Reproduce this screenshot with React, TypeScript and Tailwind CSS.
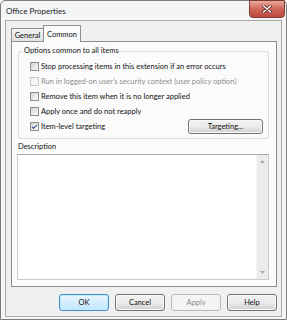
import { Check } from "lucide-react";

const options = [
  { label: "Stop processing items in this extension if an error occurs", checked: false, disabled: false },
  { label: "Run in logged-on user's security context (user policy option)", checked: false, disabled: true },
  { label: "Remove this item when it is no longer applied", checked: false, disabled: false },
  { label: "Apply once and do not reapply", checked: false, disabled: false },
  { label: "Item-level targeting", checked: true, disabled: false },
];

function CheckBox({ checked, disabled }: { checked: boolean; disabled: boolean }) {
  return (
    <span
      className={
        disabled
          ? "w-[9px] h-[9px] shrink-0 border border-[#c9c9c9] bg-[#f4f4f4]"
          : "w-[9px] h-[9px] shrink-0 border border-[#8c8c8c] bg-gradient-to-br from-[#d4d4d4] to-[#fafafa] flex items-center justify-center"
      }
    >
      {checked && <Check size={8} strokeWidth={3.5} className="text-[#26418c]" />}
    </span>
  );
}

function Button({ label, kind }: { label: string; kind?: "default" | "disabled" }) {
  const base = "w-[50px] h-[17px] rounded-[3px] border flex items-center justify-center";
  if (kind === "default")
    return (
      <div className={`${base} border-[#3d8ccc] bg-gradient-to-b from-[#eaf6fd] to-[#bee6fd] shadow-[inset_0_0_0_1px_#c8eafc]`}>
        {label}
      </div>
    );
  if (kind === "disabled")
    return <div className={`${base} border-[#b5b9bc] bg-[#f4f4f4] text-[#8a8a8a]`}>{label}</div>;
  return (
    <div className={`${base} border-[#707070] bg-gradient-to-b from-[#f2f2f2] via-[#ebebeb] to-[#cfcfcf] shadow-[inset_0_0_0_1px_#fbfbfb]`}>
      {label}
    </div>
  );
}

export default function App() {
  return (
    <div className="w-[287px] h-[320px] bg-white font-['Lato',sans-serif] text-[7.5px] leading-none text-[#111] whitespace-nowrap">
      <div className="w-[287px] h-[320px] flex flex-col border border-[#7b7b7b] rounded-t-[5px] bg-[#f4f5f6]">
        {/* Title bar */}
        <div className="relative h-[19px] shrink-0 flex items-center pl-[5px] pt-[1px]">
          <span className="text-[8px] text-[#222]">Office Properties</span>
          <div className="absolute right-[1px] top-[-1px] w-[36px] h-[18px] rounded-b-[4px] border border-[#7d3a35] bg-gradient-to-b from-[#e9a99c] via-[#d0675a] to-[#c0463c] flex items-center justify-center">
            <svg width="10" height="8" viewBox="0 0 10 8">
              <path d="M1.5 1 L8.5 7 M8.5 1 L1.5 7" stroke="#5e2620" strokeWidth="3" strokeLinecap="round" />
              <path d="M1.5 1 L8.5 7 M8.5 1 L1.5 7" stroke="#fff" strokeWidth="1.6" strokeLinecap="round" />
            </svg>
          </div>
        </div>

        {/* Client area */}
        <div className="flex-1 mx-[4px] mb-[2px] border border-[#a9a9a9] bg-[#f0f0f0] flex flex-col">
          {/* Tabs */}
          <div className="flex items-end ml-[5px] mt-[4px] h-[16px]">
            <div className="h-[13px] w-[33px] border border-b-0 border-[#8c8e94] bg-gradient-to-b from-[#f3f3f3] to-[#e3e3e3] flex items-center justify-center pt-[1px]">
              General
            </div>
            <div className="relative z-10 h-[17px] mb-[-1px] w-[38px] -ml-[1px] border border-b-0 border-[#8c8e94] bg-[#fbfbfb] flex items-start justify-center pt-[5px]">
              Common
            </div>
          </div>

          {/* Panel */}
          <div className="h-[246px] ml-[5px] mr-[4px] border border-[#8c8e94] bg-[#fbfbfb] flex flex-col">
            {/* Group box */}
            <div className="relative h-[88px] mt-[9px] ml-[6px] mr-[7px] border border-[#d5dfe5] rounded-[2px] flex flex-col pt-[7px] pb-[4px]">
              <span className="absolute left-[4px] top-[-5px] px-[1px] bg-[#fbfbfb]">Options common to all items</span>
              {options.map((o) => (
                <div key={o.label} className="h-[15px] flex items-center pl-[11px] pr-[5px] gap-[2px]">
                  <CheckBox checked={o.checked} disabled={o.disabled} />
                  <span className={o.disabled ? "text-[#8d8d8d]" : ""}>{o.label}</span>
                  {o.checked && (
                    <div className="ml-auto w-[75px] h-[15px] rounded-[3px] border border-[#707070] bg-gradient-to-b from-[#f2f2f2] via-[#ebebeb] to-[#cfcfcf] shadow-[inset_0_0_0_1px_#fbfbfb] flex items-center justify-center">
                      Targeting...
                    </div>
                  )}
                </div>
              ))}
            </div>

            {/* Description */}
            <div className="h-[15px] flex items-center pl-[6px]">Description</div>
            <div className="h-[126px] ml-[5px] mr-[7px] border border-[#c8cbcf] border-t-[#a7a9ad] bg-white flex justify-end">
              <div className="w-[12px] h-full bg-[#ececec] border-l border-[#f6f6f6] flex flex-col items-center justify-between py-[5px]">
                <svg width="5" height="3" viewBox="0 0 5 3">
                  <path d="M0 3 L2.5 0 L5 3 Z" fill="#a8a8a8" />
                </svg>
                <svg width="5" height="3" viewBox="0 0 5 3">
                  <path d="M0 0 L2.5 3 L5 0 Z" fill="#a8a8a8" />
                </svg>
              </div>
            </div>
          </div>

          {/* Buttons */}
          <div className="flex justify-end gap-[6px] mt-[7px] mr-[4px]">
            <Button label="OK" kind="default" />
            <Button label="Cancel" />
            <Button label="Apply" kind="disabled" />
            <Button label="Help" />
          </div>
        </div>
      </div>
    </div>
  );
}
